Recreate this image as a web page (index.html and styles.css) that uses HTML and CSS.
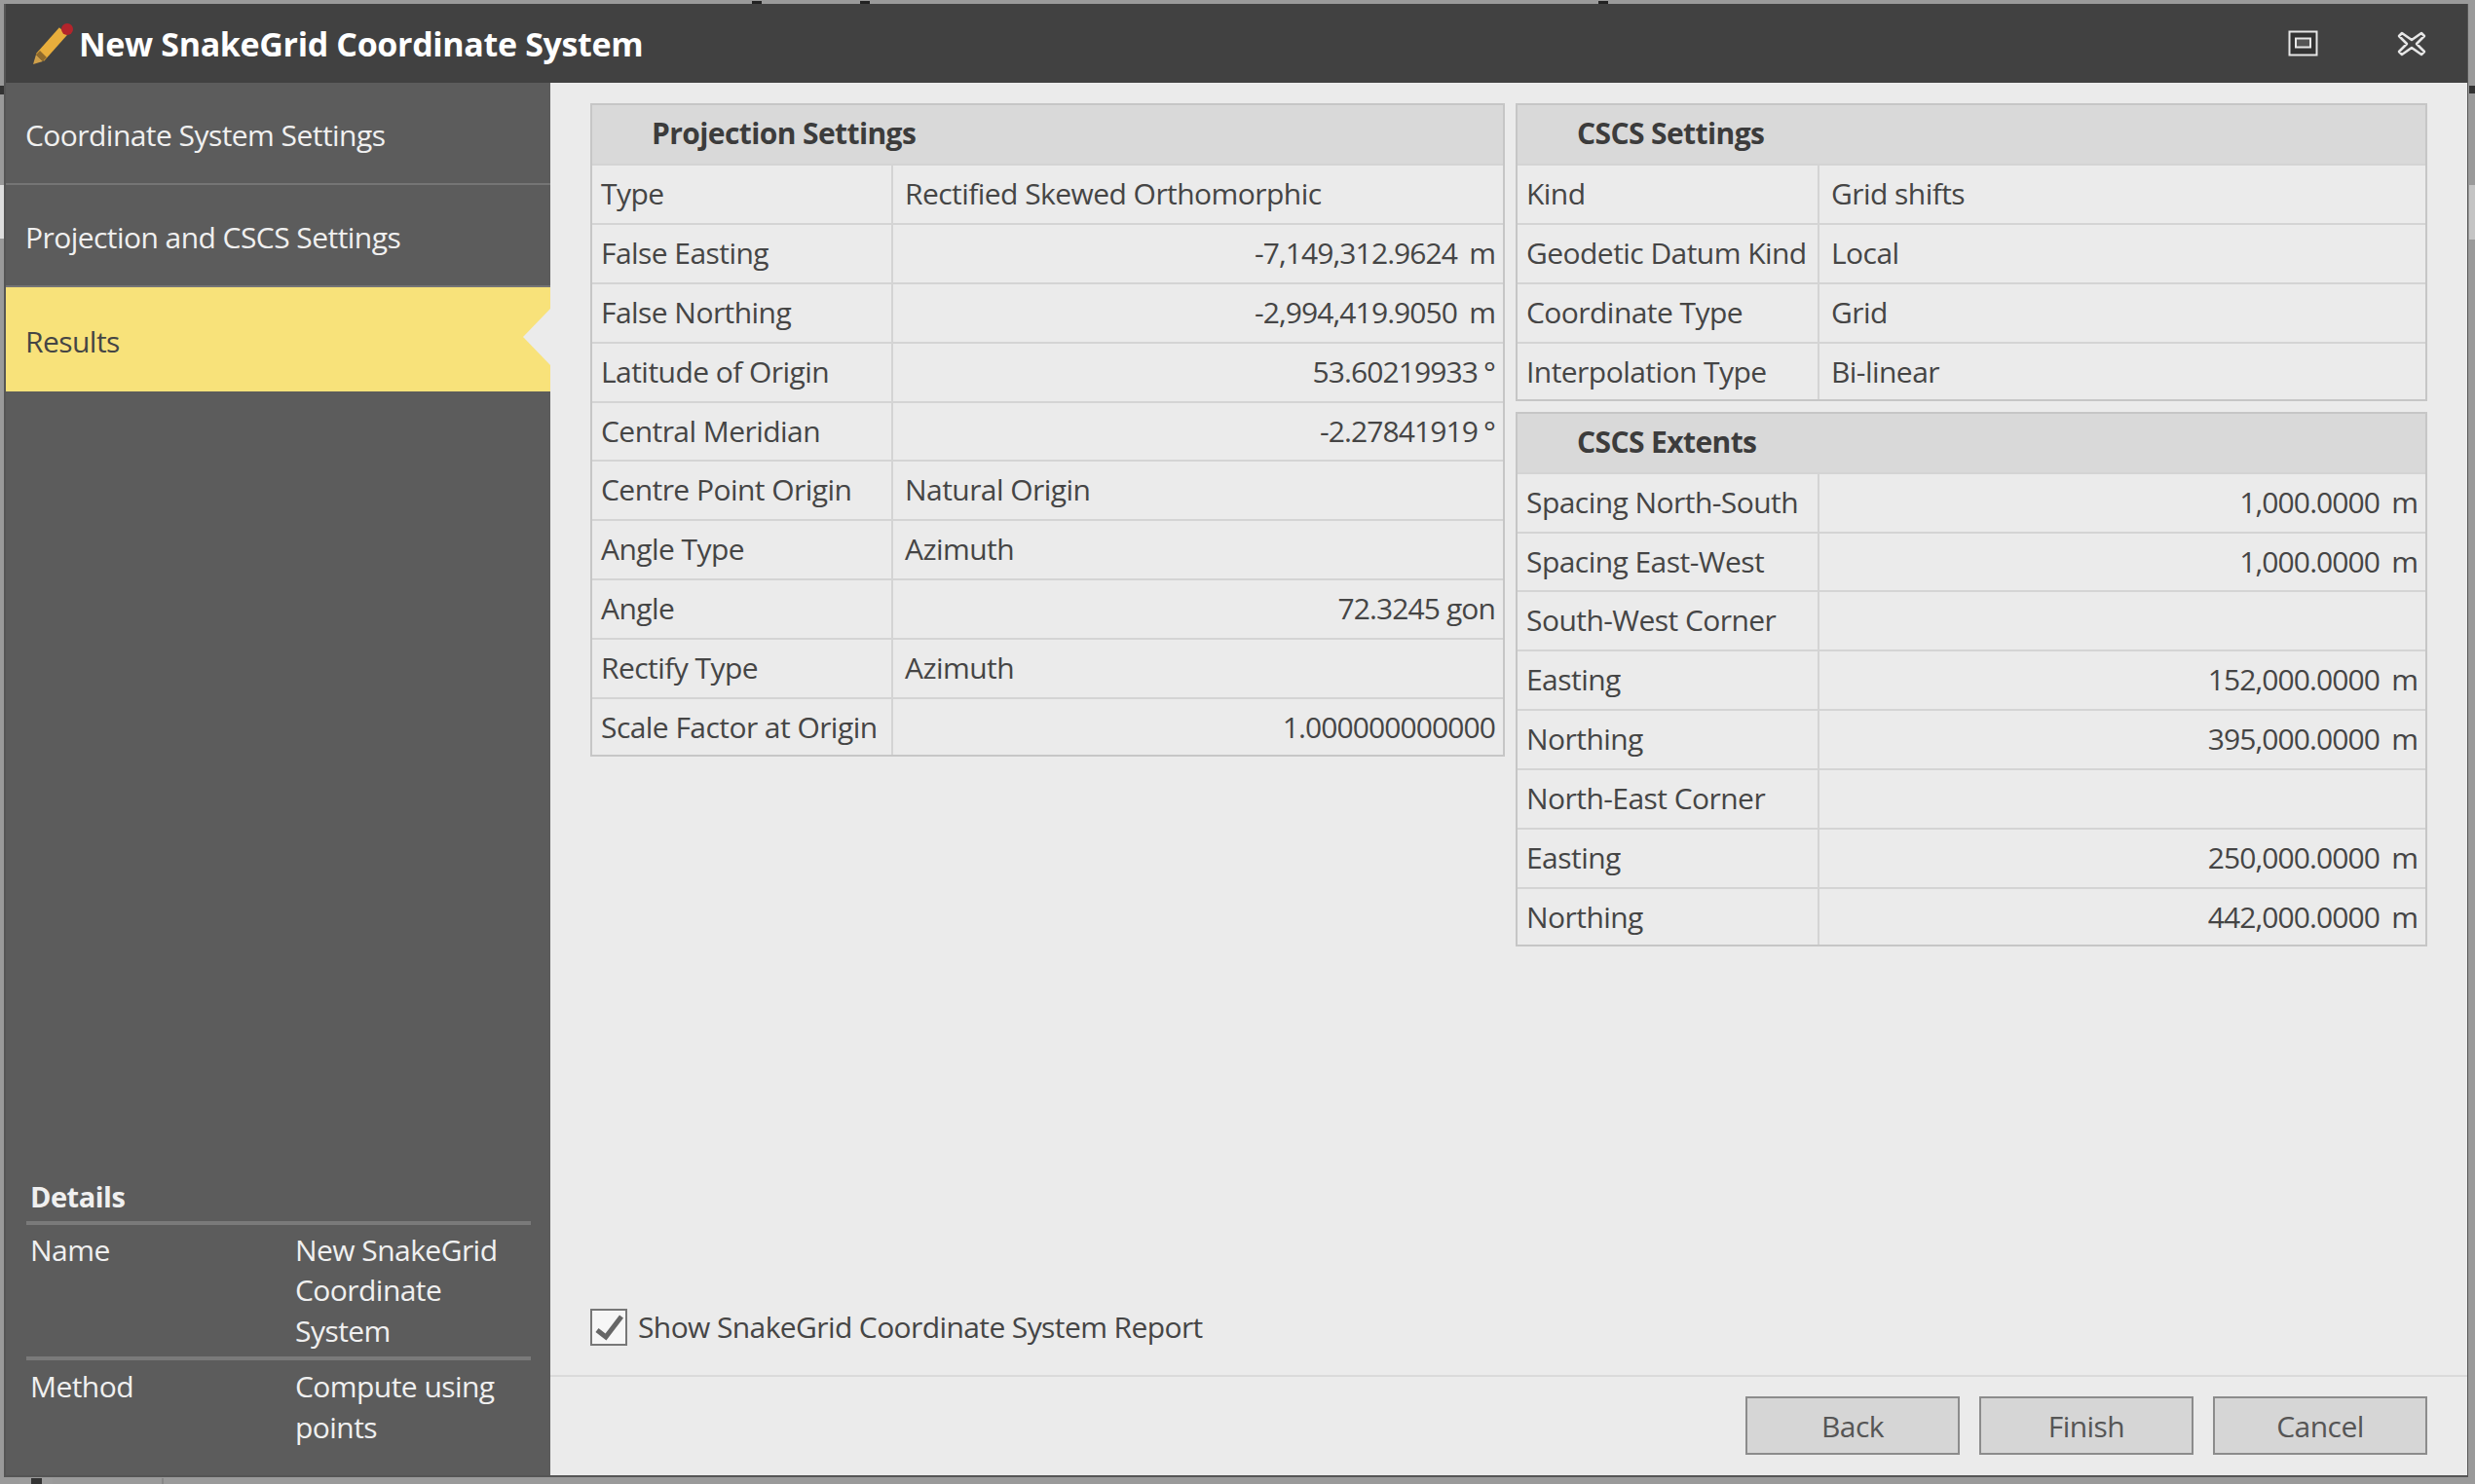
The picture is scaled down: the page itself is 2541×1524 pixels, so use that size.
FILE: index.html
```html
<!DOCTYPE html>
<html>
<head>
    <title>New SnakeGrid Coordinate System</title>
    <link rel="stylesheet" href="styles.css">
</head>
<body>
    <!-- Bits of the application showing round the dialog -->
    <div class="backdrop">
        <i class="bit tick-a"></i>
        <i class="bit tick-b"></i>
        <i class="bit tick-c"></i>
        <i class="bit left-dark"></i>
        <i class="bit left-light"></i>
        <i class="bit right-dark"></i>
        <i class="bit right-light"></i>
        <i class="bit foot-grey"></i>
        <i class="bit foot-dark"></i>
        <i class="bit foot-line"></i>
    </div>

    <div class="window">
        <!-- Title bar -->
        <header class="titlebar">
            <svg class="pencil" width="42" height="42" viewBox="0 0 42 42">
                <path d="M0 42 L3 32 L10 39 Z" fill="#cfa04a"/>
                <path d="M7 35 L31 8" fill="none" stroke="#e8ae3c" stroke-width="11"/>
                <path d="M3 32 L7 28 L14 35 L10 39 Z" fill="#8f6a2c"/>
                <circle cx="35" cy="6" r="6" fill="#b3242b"/>
            </svg>
            <h1>New SnakeGrid Coordinate System</h1>
            <svg class="win-btn restore" width="32" height="27" viewBox="0 0 32 27">
                <rect x="1.5" y="1.5" width="28" height="24" fill="#333" stroke="#e6e6e6" stroke-width="2"/>
                <rect x="8" y="8.5" width="15" height="9" fill="#555" stroke="#e6e6e6" stroke-width="2"/>
            </svg>
            <svg class="win-btn close" width="30" height="28" viewBox="0 0 30 28">
                <path d="M5 3 L15 10 L25 3 L28 6 L20 14 L28 22 L25 25 L15 18 L5 25 L2 22 L10 14 L2 6 Z" fill="#414141" stroke="#e6e6e6" stroke-width="2.5" stroke-linejoin="round"/>
            </svg>
        </header>

        <div class="content">
            <!-- Left steps -->
            <aside class="sidebar">
                <nav>
                    <a class="step">Coordinate System Settings</a>
                    <a class="step">Projection and CSCS Settings</a>
                    <a class="step active">Results</a>
                </nav>
                <div class="details">
                    <div class="details-title">Details</div>
                    <div class="details-row">
                        <span>Name</span>
                        <span>New SnakeGrid Coordinate System</span>
                    </div>
                    <div class="details-row last">
                        <span>Method</span>
                        <span>Compute using points</span>
                    </div>
                </div>
            </aside>

            <main class="panel">
                <div class="tables">
                    <section class="sheet">
                        <div class="sheet-head">Projection Settings</div>
                        <div class="row"><div class="key">Type</div><div class="val">Rectified Skewed Orthomorphic</div></div>
                        <div class="row"><div class="key">False Easting</div><div class="val num">-7,149,312.9624<span class="unit">m</span></div></div>
                        <div class="row"><div class="key">False Northing</div><div class="val num">-2,994,419.9050<span class="unit">m</span></div></div>
                        <div class="row"><div class="key">Latitude of Origin</div><div class="val num">53.60219933<span class="deg">°</span></div></div>
                        <div class="row"><div class="key">Central Meridian</div><div class="val num">-2.27841919<span class="deg">°</span></div></div>
                        <div class="row"><div class="key">Centre Point Origin</div><div class="val">Natural Origin</div></div>
                        <div class="row"><div class="key">Angle Type</div><div class="val">Azimuth</div></div>
                        <div class="row"><div class="key">Angle</div><div class="val num">72.3245 gon</div></div>
                        <div class="row"><div class="key">Rectify Type</div><div class="val">Azimuth</div></div>
                        <div class="row"><div class="key">Scale Factor at Origin</div><div class="val num">1.000000000000</div></div>
                    </section>
                    <div class="right-col">
                        <section class="sheet">
                            <div class="sheet-head">CSCS Settings</div>
                            <div class="row"><div class="key">Kind</div><div class="val">Grid shifts</div></div>
                            <div class="row"><div class="key">Geodetic Datum Kind</div><div class="val">Local</div></div>
                            <div class="row"><div class="key">Coordinate Type</div><div class="val">Grid</div></div>
                            <div class="row"><div class="key">Interpolation Type</div><div class="val">Bi-linear</div></div>
                        </section>
                        <section class="sheet">
                            <div class="sheet-head">CSCS Extents</div>
                            <div class="row"><div class="key">Spacing North-South</div><div class="val num">1,000.0000<span class="unit">m</span></div></div>
                            <div class="row"><div class="key">Spacing East-West</div><div class="val num">1,000.0000<span class="unit">m</span></div></div>
                            <div class="row"><div class="key">South-West Corner</div><div class="val"></div></div>
                            <div class="row"><div class="key">Easting</div><div class="val num">152,000.0000<span class="unit">m</span></div></div>
                            <div class="row"><div class="key">Northing</div><div class="val num">395,000.0000<span class="unit">m</span></div></div>
                            <div class="row"><div class="key">North-East Corner</div><div class="val"></div></div>
                            <div class="row"><div class="key">Easting</div><div class="val num">250,000.0000<span class="unit">m</span></div></div>
                            <div class="row"><div class="key">Northing</div><div class="val num">442,000.0000<span class="unit">m</span></div></div>
                        </section>
                    </div>
                </div>

                <label class="report">
                    <span class="checkbox">
                        <svg width="34" height="34" viewBox="0 0 34 34">
                            <path d="M5 20 L14 27 L30 6" fill="none" stroke="#666" stroke-width="5"/>
                        </svg>
                    </span>
                    Show SnakeGrid Coordinate System Report
                </label>

                <footer class="buttons">
                    <button>Back</button>
                    <button>Finish</button>
                    <button>Cancel</button>
                </footer>
            </main>
        </div>
    </div>
</body>
</html>
```

FILE: styles.css
```css
html, body {
    height: 100%;
}
body {
    margin: 0;
    background-color: #9a9a9a;
    font-family: "Open Sans", sans-serif;
    font-size: 30px;
    letter-spacing: -0.55px;
    color: #454545;
    overflow: hidden;
}

/* what is left of the app behind the dialog */
.bit {
    position: absolute;
    display: block;
}
.tick-a { left: 772px; top: 1px; width: 10px; height: 3px; background: #222; }
.tick-b { left: 883px; top: 1px; width: 10px; height: 3px; background: #222; }
.tick-c { left: 1641px; top: 1px; width: 10px; height: 3px; background: #222; }
.left-dark { left: 0; top: 88px; width: 4px; height: 9px; background: #333; }
.left-light { left: 0; top: 190px; width: 4px; height: 55px; background: #dedede; }
.right-dark { left: 2535px; top: 88px; width: 6px; height: 8px; background: #333; }
.right-light { left: 2535px; top: 190px; width: 6px; height: 56px; background: #c4c4c4; }
.foot-grey { left: 20px; top: 1518px; width: 34px; height: 6px; background: #9c9c9c; }
.foot-dark { left: 32px; top: 1518px; width: 11px; height: 6px; background: #333; }
.foot-line { left: 166px; top: 1518px; width: 2px; height: 6px; background: #888; }

.window {
    position: absolute;
    left: 4px;
    top: 4px;
    width: 2530px;
    height: 1513px;
    box-sizing: border-box;
    border-style: solid;
    border-color: #555;
    border-width: 0 1px 2px 2px;
    display: flex;
    flex-direction: column;
}

/* title bar */
.titlebar {
    height: 81px;
    flex: none;
    background-color: #414141;
    display: flex;
    align-items: center;
    padding-left: 28px;
    color: white;
}
.pencil {
    flex: none;
    margin-right: 5px;
}
.titlebar h1 {
    margin: 0;
    font-size: 34px;
    font-weight: 700;
    letter-spacing: -0.35px;
    flex: 1;
}
.win-btn {
    flex: none;
}
.restore {
    margin-right: 80px;
}
.close {
    margin-right: 42px;
}

.content {
    flex: 1;
    display: flex;
    min-height: 0;
}

/* left side */
.sidebar {
    width: 559px;
    flex: none;
    background-color: #5c5c5c;
    color: #f0f0f0;
    display: flex;
    flex-direction: column;
    justify-content: space-between;
}
.step {
    display: flex;
    align-items: center;
    height: 105px;
    padding: 3px 0 0 20px;
    border-bottom: 2px solid #757575;
    box-sizing: border-box;
}
.step.active {
    position: relative;
    height: 107px;
    background-color: #f8e27a;
    color: #454545;
    border-bottom: none;
}
.step.active::after {
    content: "";
    position: absolute;
    right: 0;
    top: 22px;
    border-style: solid;
    border-width: 29px 28px 29px 0;
    border-color: transparent #ebebeb transparent transparent;
}
.details {
    padding: 0 20px 0 21px;
    margin-bottom: 23px;
}
.details-title {
    font-weight: 700;
    font-size: 29px;
    letter-spacing: -0.5px;
    padding-left: 4px;
    height: 50px;
    line-height: 50px;
    border-bottom: 4px solid #7a7a7a;
}
.details-row {
    display: flex;
    border-bottom: 4px solid #7a7a7a;
    padding: 5px 0 6px 4px;
    line-height: 41.5px;
}
.details-row.last {
    border-bottom: none;
    padding-top: 6px;
}
.details-row span:first-child {
    width: 272px;
    flex: none;
}
.details-row span:last-child {
    width: 215px;
}

/* right side */
.panel {
    flex: 1;
    background-color: #ebebeb;
    display: flex;
    flex-direction: column;
    min-width: 0;
}
.tables {
    flex: 1;
    display: flex;
    gap: 11px;
    padding: 21px 41px 0;
    align-items: flex-start;
}
.right-col {
    flex: 1;
    display: flex;
    flex-direction: column;
    gap: 11px;
}
.tables > .sheet {
    width: 939px;
    flex: none;
}
.sheet {
    border: 2px solid #c6c6c6;
    box-sizing: border-box;
}
.sheet-head {
    height: 60px;
    line-height: 58px;
    background-color: #d9d9d9;
    font-weight: 700;
    letter-spacing: -0.6px;
    padding-left: 61px;
    color: #3c3c3c;
}
.row {
    display: flex;
    height: 60.9px;
    box-sizing: border-box;
    border-top: 2px solid #d4d4d4;
    line-height: 58px;
}
.row:last-child {
    height: 59px;
}
.key {
    width: 309px;
    flex: none;
    padding-left: 9px;
    box-sizing: border-box;
    border-right: 2px solid #d4d4d4;
    white-space: nowrap;
}
.right-col .key {
    width: 310px;
}
.val {
    flex: 1;
    padding: 0 8px 0 12px;
    white-space: nowrap;
}
.val.num {
    text-align: right;
    letter-spacing: -0.9px;
}
.unit {
    margin-left: 12px;
}
.deg {
    margin-left: 6px;
}

.report {
    flex: none;
    display: flex;
    align-items: center;
    gap: 11px;
    padding-left: 41px;
    margin-bottom: 29px;
    letter-spacing: -0.6px;
}
.checkbox {
    width: 38px;
    height: 38px;
    box-sizing: border-box;
    border: 2px solid #777;
    background-color: #f6f6f6;
    display: flex;
}
.buttons {
    flex: none;
    height: 103px;
    box-sizing: border-box;
    border-top: 2px solid #dadada;
    display: flex;
    justify-content: flex-end;
    gap: 20px;
    padding: 20px 41px 0 0;
}
.buttons button {
    width: 220px;
    height: 60px;
    background-color: #d6d6d6;
    border: 2px solid #8c8c8c;
    font: inherit;
    letter-spacing: inherit;
    color: #555;
}
```
